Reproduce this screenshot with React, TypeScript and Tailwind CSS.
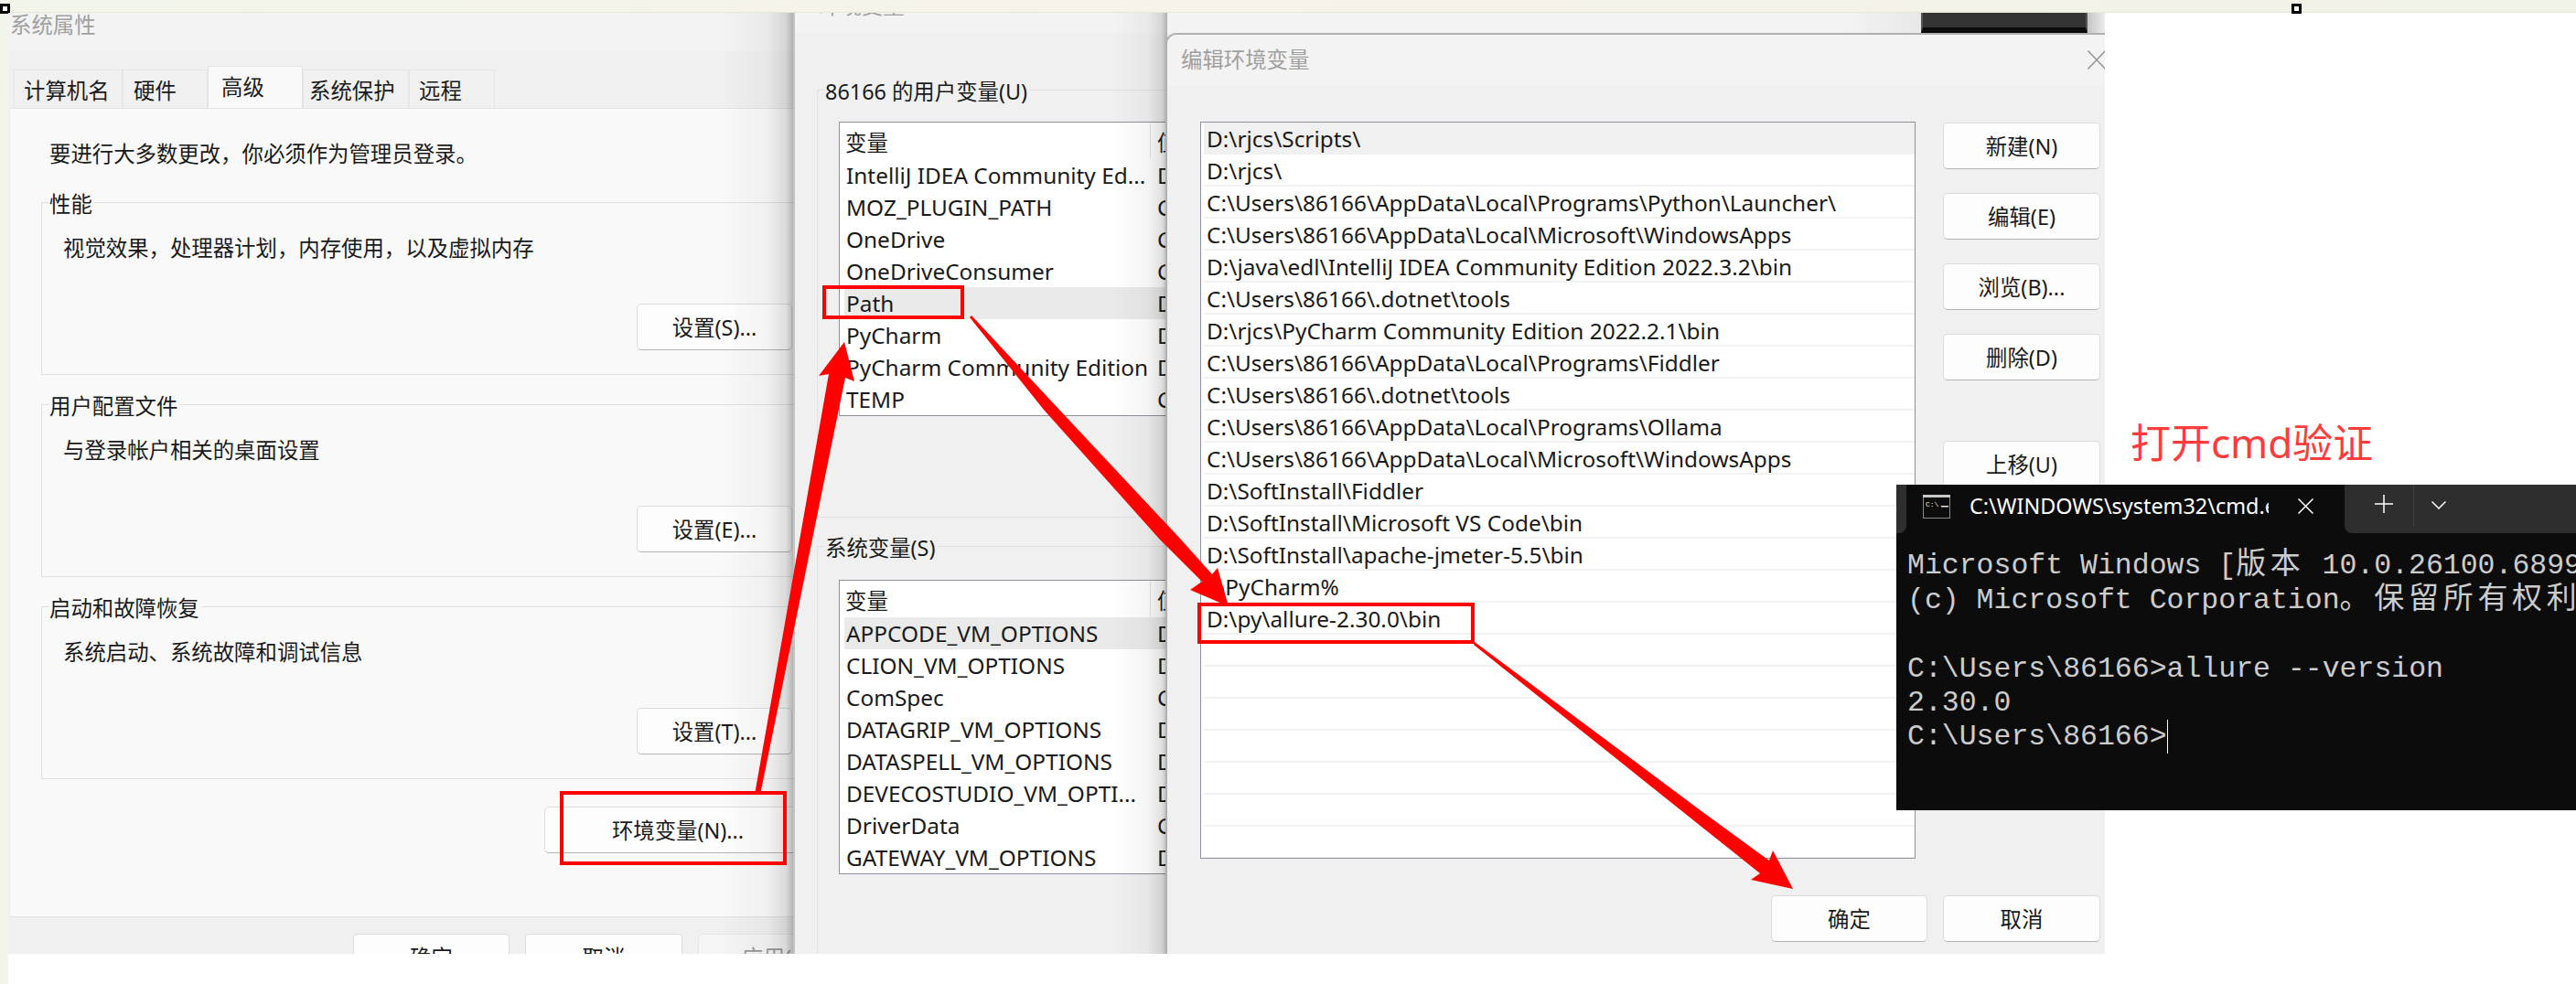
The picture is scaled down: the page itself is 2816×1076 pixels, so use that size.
const tabs = [
  { label: "计算机名", cls: "w-[119px] pl-[10px]" },
  { label: "硬件", cls: "w-[93px] pl-[11px]" },
  { label: "高级", cls: "w-[104px] pl-[14px]", active: true },
  { label: "系统保护", cls: "w-[116px] pl-[6px]" },
  { label: "远程", cls: "w-[94px] pl-[10px]" },
];

const groups = [
  { title: "性能", desc: "视觉效果，处理器计划，内存使用，以及虚拟内存", btn: "设置(S)...", cls: "h-[189px] mt-[36px]" },
  { title: "用户配置文件", desc: "与登录帐户相关的桌面设置", btn: "设置(E)...", cls: "h-[189px] mt-[32px]" },
  { title: "启动和故障恢复", desc: "系统启动、系统故障和调试信息", btn: "设置(T)...", cls: "h-[189px] mt-[32px]" },
];

const userVars = [
  ["IntelliJ IDEA Community Ed...", "D"],
  ["MOZ_PLUGIN_PATH", "C"],
  ["OneDrive", "C"],
  ["OneDriveConsumer", "C"],
  ["Path", "D"],
  ["PyCharm", "D"],
  ["PyCharm Community Edition", "D"],
  ["TEMP", "C"],
];

const sysVars = [
  ["APPCODE_VM_OPTIONS", "D"],
  ["CLION_VM_OPTIONS", "D"],
  ["ComSpec", "C"],
  ["DATAGRIP_VM_OPTIONS", "D"],
  ["DATASPELL_VM_OPTIONS", "D"],
  ["DEVECOSTUDIO_VM_OPTI...", "D"],
  ["DriverData", "C"],
  ["GATEWAY_VM_OPTIONS", "D"],
];

const paths = [
  "D:\\rjcs\\Scripts\\",
  "D:\\rjcs\\",
  "C:\\Users\\86166\\AppData\\Local\\Programs\\Python\\Launcher\\",
  "C:\\Users\\86166\\AppData\\Local\\Microsoft\\WindowsApps",
  "D:\\java\\edl\\IntelliJ IDEA Community Edition 2022.3.2\\bin",
  "C:\\Users\\86166\\.dotnet\\tools",
  "D:\\rjcs\\PyCharm Community Edition 2022.2.1\\bin",
  "C:\\Users\\86166\\AppData\\Local\\Programs\\Fiddler",
  "C:\\Users\\86166\\.dotnet\\tools",
  "C:\\Users\\86166\\AppData\\Local\\Programs\\Ollama",
  "C:\\Users\\86166\\AppData\\Local\\Microsoft\\WindowsApps",
  "D:\\SoftInstall\\Fiddler",
  "D:\\SoftInstall\\Microsoft VS Code\\bin",
  "D:\\SoftInstall\\apache-jmeter-5.5\\bin",
  "%PyCharm%",
  "D:\\py\\allure-2.30.0\\bin",
  "", "", "", "", "", "", "",
];

function Btn({ label, cls }: { label: string; cls: string }) {
  return (
    <div className={`h-[51px] shrink-0 flex items-center justify-center pt-[2px] rounded-[5px] border border-[#dcdcdc] border-b-[#b4b4b4] bg-[#fdfdfd] text-[#1a1a1a] ${cls}`}>
      {label}
    </div>
  );
}

function VarList({ rows, selected }: { rows: string[][]; selected: number }) {
  return (
    <div className="ml-[23px] w-[700px] border border-[#8b909a] bg-white">
      <div className="flex h-[40px] pl-[6px]">
        <div className="w-[333px] leading-[44px]">变量</div>
        <div className="w-px h-[38px] bg-[#e5e5e5] mt-[1px]" />
        <div className="pl-[7px] leading-[44px]">值</div>
      </div>
      <div className="ml-[5px] text-[24.4px]">
        {rows.map((r, i) => (
          <div key={r[0]} className={`flex h-[35px] leading-[35px] pl-[2px] ${i === selected ? "bg-[#eaeaea]" : ""}`}>
            <div className="w-[340px] whitespace-nowrap">{r[0]}</div>
            <div>{r[1]}</div>
          </div>
        ))}
      </div>
    </div>
  );
}

function Shadow({ cls }: { cls: string }) {
  return <div className={`absolute top-0 bottom-0 bg-[linear-gradient(to_right,rgba(0,0,0,0),rgba(0,0,0,0.04)_65%,rgba(0,0,0,0.12)_90%,rgba(0,0,0,0.28))] ${cls}`} />;
}

function Handle({ cls }: { cls: string }) {
  return <div className={`absolute top-[4px] h-[11px] w-[11px] border-[3px] border-black bg-white ${cls}`} />;
}

export default function App() {
  return (
    <div className="relative w-[2816px] h-[1076px] overflow-hidden bg-white text-[23.4px] text-[#1a1a1a] font-['Noto_Sans','Noto_Sans_CJK_SC',sans-serif]">
      {/* strip of the document the shot was pasted into */}
      <div className="absolute inset-x-0 top-0 h-[14px] bg-[linear-gradient(to_right,#f1f5ea,#f7f2ea_45%,#f1f2e7)] border-b border-[#e6e8dc]" />
      <div className="absolute left-0 top-0 bottom-0 w-[9px] bg-[#f1f5ea]" />
      <Handle cls="left-0" />
      <Handle cls="left-[2505px]" />

      {/* 系统属性 */}
      <div className="absolute left-[9px] top-[14px] w-[858px] h-[1029px] overflow-hidden bg-[#f0f0f0]">
        <div className="h-[42px] bg-[#f3f3f3] pl-[2px] leading-[26px] text-[#a0a0a0]">系统属性</div>
        <div className="flex items-end h-[62px] pl-[6px]">
          {tabs.map((t) => (
            <div
              key={t.label}
              className={`${t.cls} border border-b-0 ${
                t.active ? "h-[46px] bg-[#f9f9f9] border-[#e3e3e3] leading-[44px]" : "h-[42px] bg-[#f0f0f0] border-[#e6e6e6] leading-[44px]"
              }`}
            >
              {t.label}
            </div>
          ))}
        </div>
        <div className="ml-[2px] h-[885px] w-[900px] bg-[#f9f9f9] border-y border-[#e3e3e3]">
          <div className="pl-[43px] pt-[32px] leading-[34px]">要进行大多数更改，你必须作为管理员登录。</div>
          <div className="pl-[34px]">
            {groups.map((g) => (
              <div key={g.title} className={`relative w-[900px] border border-[#e0e0e0] pl-[23px] pt-[32px] ${g.cls}`}>
                <div className="absolute left-[8px] top-[-16px] leading-[34px] bg-[#f9f9f9] pr-[2px]">{g.title}</div>
                <div className="leading-[34px]">{g.desc}</div>
                <Btn label={g.btn} cls="mt-[44px] ml-[627px] w-[170px]" />
              </div>
            ))}
          </div>
          <Btn label="环境变量(N)..." cls="ml-[584px] mt-[30px] w-[292px]" />
        </div>
        <div className="flex gap-[17px] pl-[377px] pt-[18px]">
          <Btn label="确定" cls="w-[171px]" />
          <Btn label="取消" cls="w-[172px]" />
          <Btn label="应用(A)" cls="w-[172px] !bg-[#f5f5f5] !text-[#999999] !border-[#e5e5e5]" />
        </div>
        <Shadow cls="right-0 w-[80px]" />
      </div>

      {/* 环境变量 */}
      <div className="absolute left-[867px] top-[14px] w-[1434px] h-[1029px] overflow-hidden bg-[#f0f0f0] border-l-2 border-[#c4c4c4]">
        <div className="flex h-[22px] overflow-hidden bg-[linear-gradient(to_right,#f3f3f3_80%,#cfcfcf)]">
          <div className="w-[1231px] pl-[26px] mt-[-25px] leading-[34px] text-[#a0a0a0]">环境变量</div>
          <div className="w-[182px] h-[22px] shrink-0 bg-[#343434] border-x-2 border-[#555555] border-b-[6px] border-b-[#0c0c0c]" />
          <div className="w-[19px] shrink-0 bg-[linear-gradient(to_right,#c4c4c4,#ececec)]" />
        </div>
        <div className="relative ml-[24px] mt-[62px] w-[1000px] h-[468px] border border-[#e0e0e0] pt-[34px]">
          <div className="absolute left-[8px] top-[-16px] leading-[34px] bg-[#f0f0f0] pr-[2px]">86166 的用户变量(U)</div>
          <VarList rows={userVars} selected={4} />
        </div>
        <div className="relative ml-[24px] mt-[31px] w-[1000px] h-[500px] border border-[#e0e0e0] pt-[36px]">
          <div className="absolute left-[8px] top-[-16px] leading-[34px] bg-[#f0f0f0] pr-[2px]">系统变量(S)</div>
          <VarList rows={sysVars} selected={0} />
        </div>
        <Shadow cls="left-[345px] w-[62px]" />
      </div>

      {/* 编辑环境变量 */}
      <div className="absolute left-[1274px] top-[36px] w-[1027px] h-[1007px] overflow-hidden rounded-tl-[12px] border-l-2 border-t-2 border-[#b0b0b0] bg-[#f0f0f0]">
        <div className="flex h-[56px] bg-[#f3f3f3] justify-between">
          <div className="pl-[15px] pt-[10px] leading-[34px] text-[#a0a0a0]">编辑环境变量</div>
          <svg width="20" height="21" viewBox="0 0 20 21" className="mt-[17px] mr-[-1px]" stroke="#9a9a9a" strokeWidth="1.6" fill="none">
            <path d="M0.5 0.5L19.5 20.5M19.5 0.5L0.5 20.5" />
          </svg>
        </div>
        <div className="flex h-[885px] pt-[39px] pl-[36px]">
          <div className="w-[782px] h-[806px] border border-[#8b909a] bg-white overflow-hidden pl-[3px] text-[24.4px]">
            {paths.map((p, i) => (
              <div key={i} className={`h-[35px] leading-[35px] pl-[3px] whitespace-nowrap border-b-2 ${i === 0 ? "bg-[#f0f0f0] border-[#f0f0f0]" : "border-[#f2f2f2]"}`}>
                {p}
              </div>
            ))}
          </div>
          <div className="ml-[30px] pt-[1px] flex flex-col gap-[26px]">
            <Btn label="新建(N)" cls="w-[172px]" />
            <Btn label="编辑(E)" cls="w-[172px]" />
            <Btn label="浏览(B)..." cls="w-[172px]" />
            <Btn label="删除(D)" cls="w-[172px]" />
            <Btn label="上移(U)" cls="w-[172px] mt-[40px]" />
          </div>
        </div>
        <div className="flex gap-[17px] pl-[660px]">
          <Btn label="确定" cls="w-[171px]" />
          <Btn label="取消" cls="w-[172px]" />
        </div>
      </div>

      <div className="absolute left-[2329px] top-[456px] leading-[56px] text-[44px] text-[#ff3b3b]">打开cmd验证</div>

      {/* cmd */}
      <div className="absolute left-[2073px] top-[530px] w-[743px] h-[356px] overflow-hidden bg-[#0c0c0c]">
        <div className="flex h-[53px]">
          <div className="w-[11px] bg-[#2e2e2e] rounded-br-[8px]" />
          <div className="w-[479px] flex items-center pl-[18px] pb-[6px] text-white">
            <svg width="30" height="26" viewBox="0 0 30 26" className="shrink-0">
              <rect x="0.5" y="0.5" width="29" height="25" fill="#0c0c0c" stroke="#8a8a8a" />
              <rect x="0" y="0" width="30" height="3" fill="#c8c8c8" />
              <text x="3" y="13" fontSize="8" fill="#e6e6e6" fontFamily="Liberation Mono">C:\</text>
              <rect x="20" y="12" width="8" height="1.5" fill="#e6e6e6" />
            </svg>
            <div className="ml-[21px] w-[327px] overflow-hidden whitespace-nowrap">C:\WINDOWS\system32\cmd.exe</div>
            <svg width="17" height="17" viewBox="0 0 17 17" className="ml-[32px]" stroke="#ffffff" strokeWidth="1.5" fill="none">
              <path d="M0.5 0.5L16.5 16.5M16.5 0.5L0.5 16.5" />
            </svg>
          </div>
          <div className="flex-1 flex bg-[#2e2e2e] rounded-bl-[8px] pl-[33px]">
            <svg width="20" height="20" viewBox="0 0 20 20" className="mt-[11px]" stroke="#ffffff" strokeWidth="1.5" fill="none">
              <path d="M10 0V20M0 10H20" />
            </svg>
            <div className="ml-[22px] w-px h-[46px] bg-[#424242]" />
            <svg width="16" height="9" viewBox="0 0 16 9" className="ml-[19px] mt-[18px]" stroke="#ffffff" strokeWidth="1.5" fill="none">
              <path d="M0.5 0.5L8 8L15.5 0.5" />
            </svg>
          </div>
        </div>
        <div className="pl-[12px] pt-[17px] text-[#cccccc] text-[31.5px] leading-[37px] whitespace-nowrap font-['Liberation_Mono','Noto_Sans_CJK_SC',monospace]">
          <div className="h-[38px]">Microsoft Windows [<span className="text-[33px] tracking-[4.7px]">版本</span> 10.0.26100.6899]</div>
          <div className="h-[37px]">(c) Microsoft Corporation<span className="text-[33px] tracking-[4.7px]">。保留所有权利。</span></div>
          <div className="h-[38px]" />
          <div className="h-[37px]">C:\Users\86166&gt;allure --version</div>
          <div className="h-[37px]">2.30.0</div>
          <div className="flex h-[37px]">C:\Users\86166&gt;<span className="w-px h-[37px] bg-white" /></div>
        </div>
      </div>

      {/* annotations */}
      <div className="absolute left-[899px] top-[312px] w-[155px] h-[37px] border-[4px] border-[#ff0000]" />
      <div className="absolute left-[1309px] top-[659px] w-[303px] h-[45px] border-[4px] border-[#ff0000]" />
      <div className="absolute left-[612px] top-[865px] w-[248px] h-[81px] border-[4px] border-[#ff0000]" />
      <svg className="absolute left-0 top-0" width="2816" height="1076" viewBox="0 0 2816 1076" fill="#ff0000">
        <polygon points="825,869 906,409 895,411 923,374 934,417 924,413 831,869" />
        <polygon points="1060,347 1062,345 1158,448 1291,590 1325,628 1331,621 1343,663 1301,645 1314,636 1268,590 1141,448" />
        <polygon points="1612,702 1860,887 1934,941 1938,930 1960,972 1914,962 1924,955 1860,904 1611,705" />
      </svg>
    </div>
  );
}
